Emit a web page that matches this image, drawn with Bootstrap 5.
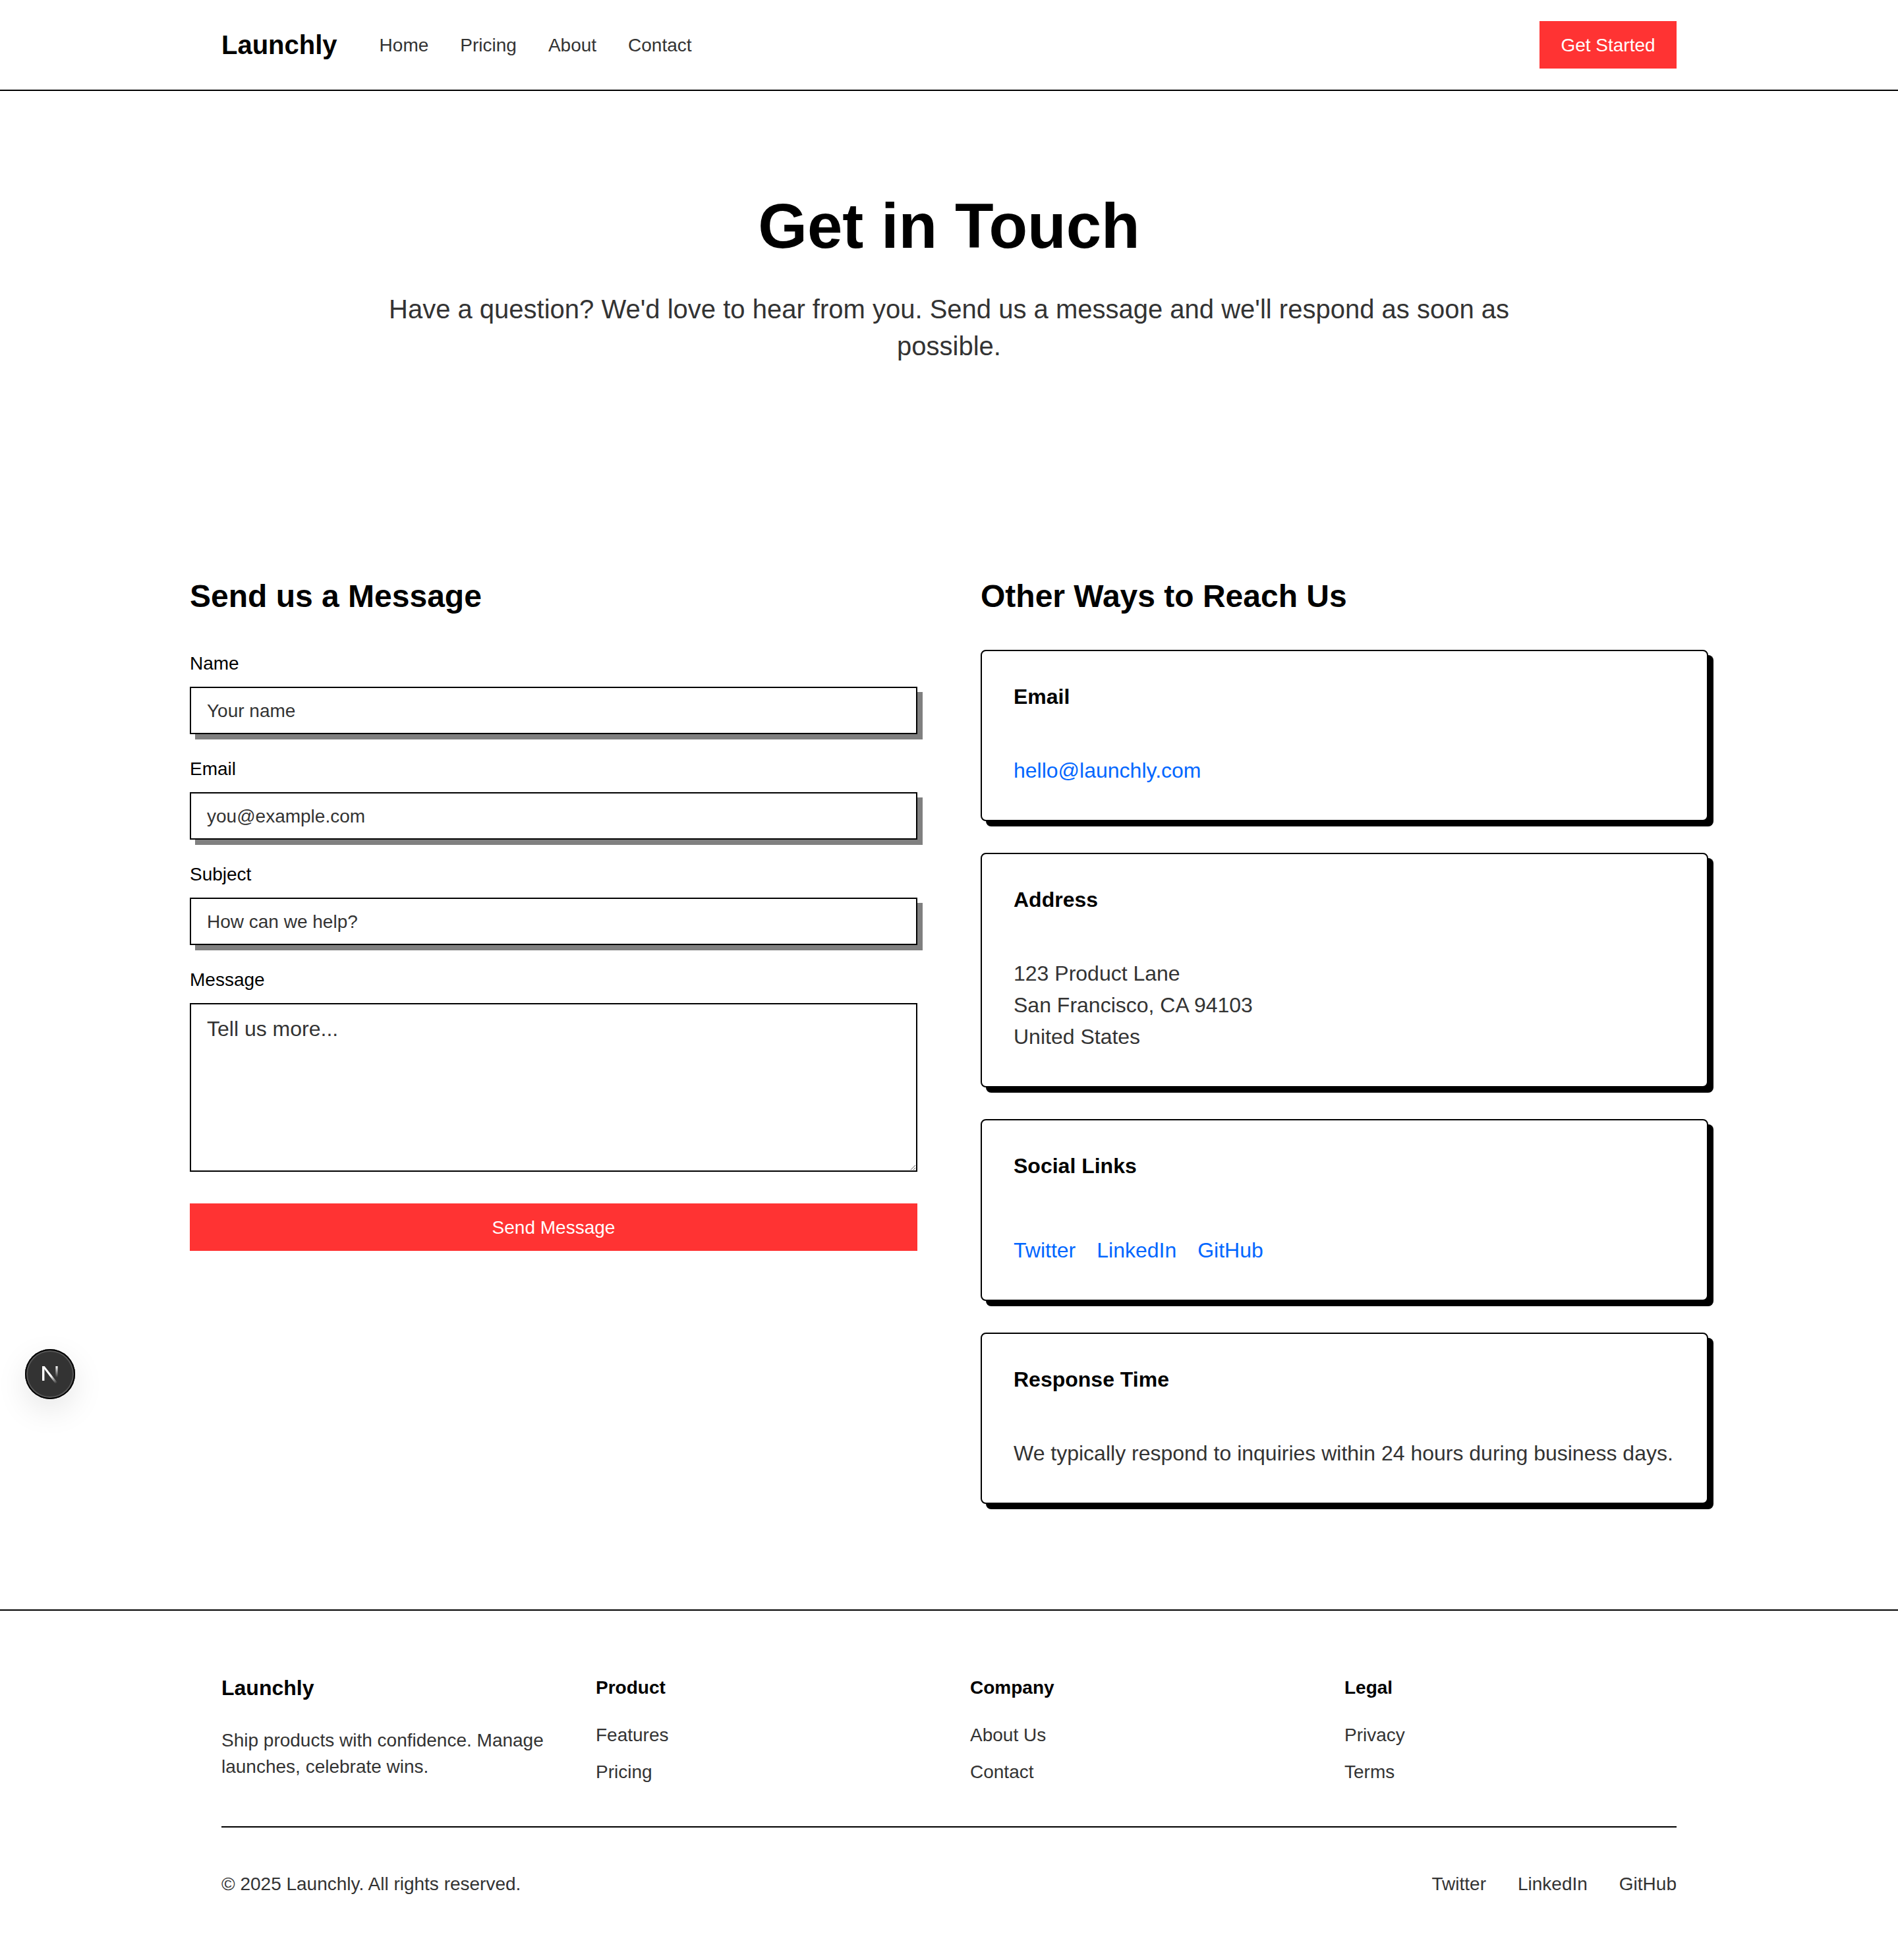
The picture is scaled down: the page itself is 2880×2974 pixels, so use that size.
<!DOCTYPE html>
<html lang="en">
<head>
<meta charset="utf-8">
<title>Launchly - Contact</title>
<link href="https://cdn.jsdelivr.net/npm/bootstrap@5.3.0/dist/css/bootstrap.min.css" rel="stylesheet">
<style>
body{font-family:"Liberation Sans",Arial,sans-serif;color:#333;background:#fff;font-size:32px;line-height:48px;position:relative}
a{text-decoration:none;color:inherit}
.site-top{height:138px;border-bottom:2px solid #000}
.wrap-top{max-width:2304px;padding:0 48px;margin:0 auto;height:136px}
.brand-word{font-size:40px;font-weight:700;color:#000;line-height:56px;margin-right:64px}
.top-links{gap:48px;font-size:28px;line-height:42px;padding-top:2px}
.cta-btn{background:#f33;color:#fff;font-size:28px;line-height:42px;height:72px;width:208px;padding:16px 0 14px;border:0;border-radius:0}
.cta-btn:hover{background:#f33;color:#fff}
.hero-block{padding:157px 0 160px;text-align:center}
.hero-title{font-size:96px;line-height:96px;font-weight:700;color:#000;margin:0 0 50px}
.hero-sub{font-size:40px;line-height:56px;width:1792px;margin:0 auto}
.page-main{width:2304px;margin:0 auto;padding:160px 0 160px;gap:96px}
.page-col{width:1104px;flex:none}
.col-title{font-size:48px;line-height:64px;font-weight:700;color:#000;margin:0 0 49px}
.f-label{display:block;font-size:28px;line-height:42px;color:#000;margin:0 0 14px}
.f-group{margin-bottom:32px}
.f-input{display:block;width:100%;height:72px;border:2px solid #000;border-radius:0;padding:17px 24px 15px;font-size:28px;line-height:36px;color:#333;box-shadow:8px 8px 0 #808080}
.f-input::placeholder,.f-area::placeholder{color:#333;opacity:1}
.f-input:focus,.f-area:focus{border-color:#000;box-shadow:8px 8px 0 #808080}
.f-area{display:block;width:100%;height:256px;border:2px solid #000;border-radius:0;padding:13px 24px 11px;font-size:32px;line-height:48px;color:#333}
.f-area:focus{box-shadow:none}
.send-btn{display:block;width:100%;margin-top:48px}
.info-stack{gap:48px}
.info-card{border:2px solid #000;border-radius:8px;box-shadow:8px 8px 0 #000;background:#fff;padding:0}
.info-body{padding:47px 48px 51px}
.info-title{font-size:32px;line-height:44px;font-weight:700;color:#000;margin:0 0 66px}
.info-link{color:#06f}
.soc-row{gap:32px;padding-top:16px}
.page-foot{border-top:2px solid #000;padding-top:97px;height:531px}
.foot-wrap{width:2304px;padding:0 48px;margin:0 auto}
.foot-grid{grid-template-columns:repeat(4,504px);gap:64px}
.foot-brand{font-size:32px;line-height:40px;font-weight:700;color:#000;margin:0 0 40px}
.foot-head{font-size:28px;line-height:40px;font-weight:700;color:#000;margin:0 0 32px}
.foot-text{font-size:28px;line-height:40px;margin:0}
.foot-list{font-size:28px;line-height:40px;gap:16px;list-style:none;margin:0;padding:0}
.foot-bar{border-top:2px solid #000;margin-top:62px;padding-top:66px;font-size:28px;line-height:40px}
.foot-social{gap:48px}
.dev-mark{position:absolute;left:38px;top:2047px;width:76px;height:76px;border-radius:50%;background:#333;box-shadow:0 0 0 2px #000 inset,0 0 0 4px #555 inset,0 16px 48px rgba(0,0,0,.1);display:flex;align-items:center;justify-content:center}
</style>
</head>
<body>
<header class="site-top">
  <div class="wrap-top d-flex align-items-center justify-content-between">
    <div class="d-flex align-items-center">
      <a class="brand-word" href="#">Launchly</a>
      <nav class="top-links d-flex">
        <a href="#">Home</a><a href="#">Pricing</a><a href="#">About</a><a href="#">Contact</a>
      </nav>
    </div>
    <a class="btn cta-btn" href="#">Get Started</a>
  </div>
</header>
<section class="hero-block">
  <h1 class="hero-title">Get in Touch</h1>
  <p class="hero-sub mb-0">Have a question? We'd love to hear from you. Send us a message and we'll respond as soon as possible.</p>
</section>
<main class="page-main d-flex">
  <div class="page-col">
    <h2 class="col-title">Send us a Message</h2>
    <form>
      <div class="f-group"><label class="f-label" for="n">Name</label><input id="n" class="form-control f-input" placeholder="Your name"></div>
      <div class="f-group"><label class="f-label" for="e">Email</label><input id="e" class="form-control f-input" placeholder="you@example.com"></div>
      <div class="f-group"><label class="f-label" for="s">Subject</label><input id="s" class="form-control f-input" placeholder="How can we help?"></div>
      <div><label class="f-label" for="m">Message</label><textarea id="m" class="form-control f-area" placeholder="Tell us more..."></textarea></div>
      <button type="button" class="btn cta-btn send-btn">Send Message</button>
    </form>
  </div>
  <div class="page-col">
    <h2 class="col-title">Other Ways to Reach Us</h2>
    <div class="d-flex flex-column info-stack">
      <div class="card info-card"><div class="info-body"><h3 class="info-title">Email</h3><a class="info-link" href="#">hello@launchly.com</a></div></div>
      <div class="card info-card"><div class="info-body"><h3 class="info-title">Address</h3><div>123 Product Lane<br>San Francisco, CA 94103<br>United States</div></div></div>
      <div class="card info-card"><div class="info-body"><h3 class="info-title">Social Links</h3><div class="d-flex soc-row"><a class="info-link" href="#">Twitter</a><a class="info-link" href="#">LinkedIn</a><a class="info-link" href="#">GitHub</a></div></div></div>
      <div class="card info-card"><div class="info-body"><h3 class="info-title">Response Time</h3><div>We typically respond to inquiries within 24 hours during business days.</div></div></div>
    </div>
  </div>
</main>
<footer class="page-foot">
  <div class="foot-wrap">
    <div class="d-grid foot-grid">
      <div><h4 class="foot-brand">Launchly</h4><p class="foot-text">Ship products with confidence. Manage launches, celebrate wins.</p></div>
      <div><h5 class="foot-head">Product</h5><ul class="foot-list d-flex flex-column"><li><a href="#">Features</a></li><li><a href="#">Pricing</a></li></ul></div>
      <div><h5 class="foot-head">Company</h5><ul class="foot-list d-flex flex-column"><li><a href="#">About Us</a></li><li><a href="#">Contact</a></li></ul></div>
      <div><h5 class="foot-head">Legal</h5><ul class="foot-list d-flex flex-column"><li><a href="#">Privacy</a></li><li><a href="#">Terms</a></li></ul></div>
    </div>
    <div class="foot-bar d-flex justify-content-between">
      <span>© 2025 Launchly. All rights reserved.</span>
      <div class="foot-social d-flex"><a href="#">Twitter</a><a href="#">LinkedIn</a><a href="#">GitHub</a></div>
    </div>
  </div>
</footer>
<div class="dev-mark">
  <svg width="24" height="28" viewBox="0 0 24 28" aria-hidden="true">
    <defs>
      <linearGradient id="g1" gradientUnits="userSpaceOnUse" x1="8" y1="6" x2="23" y2="27"><stop offset="0.45" stop-color="#fff"/><stop offset="1" stop-color="#fff" stop-opacity="0"/></linearGradient>
      <linearGradient id="g2" x1="0" y1="0" x2="0" y2="1"><stop offset="0" stop-color="#fff"/><stop offset="1" stop-color="#fff" stop-opacity="0"/></linearGradient>
    </defs>
    <path d="M0 2h3.4v22H0z" fill="#fff"/>
    <path d="M0 2h3.6L24 28h-4.4z" fill="url(#g1)"/>
    <rect x="20.4" y="2" width="3.2" height="17" fill="url(#g2)"/>
  </svg>
</div>
<script src="https://cdn.jsdelivr.net/npm/bootstrap@5.3.0/dist/js/bootstrap.bundle.min.js"></script>
</body>
</html>
